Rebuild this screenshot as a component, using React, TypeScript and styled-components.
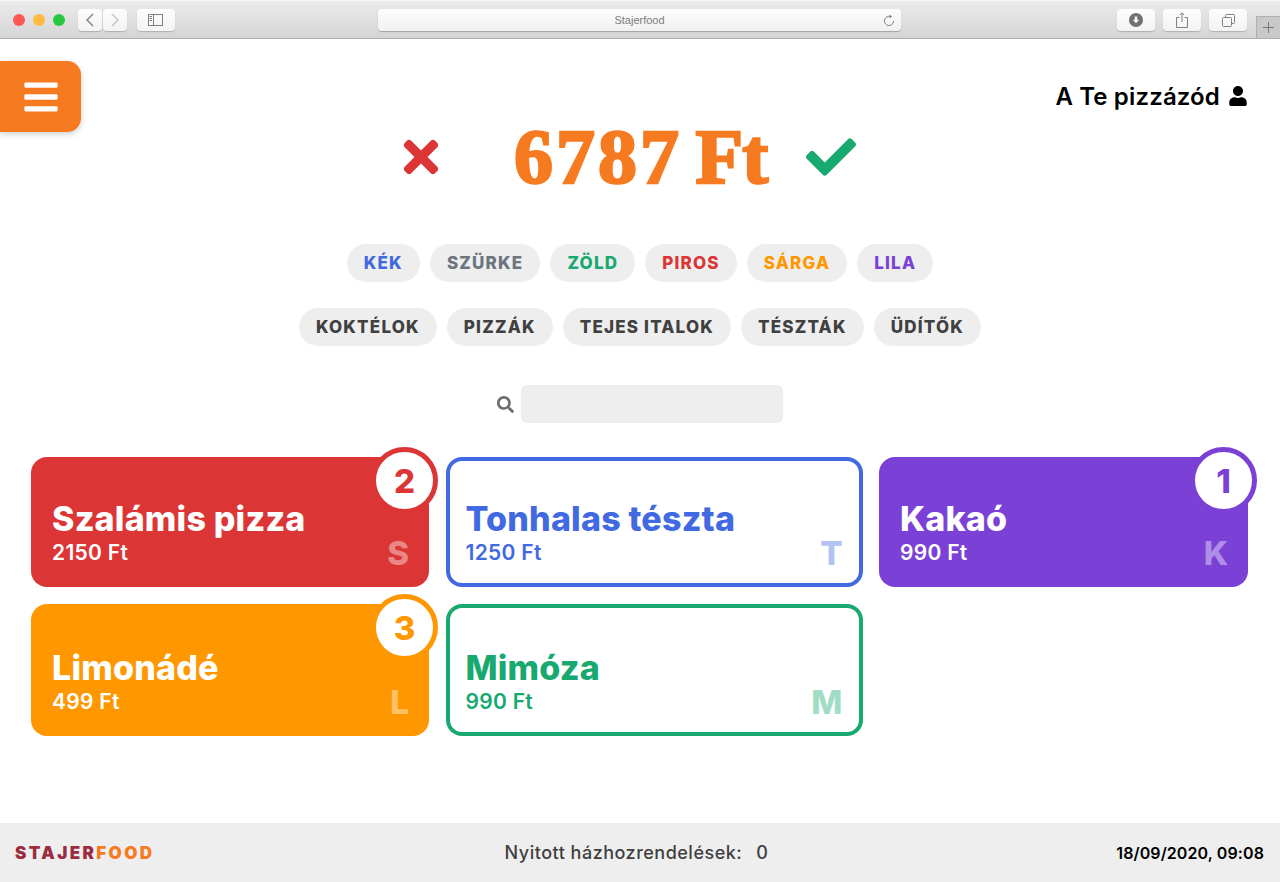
import styled, { createGlobalStyle } from 'styled-components';
import { FaBars, FaCheck, FaSearch, FaTimes, FaUser } from 'react-icons/fa';

const RED = '#dc3535';
const BLUE = '#4169e1';
const GREEN = '#17a96f';
const AMBER = '#ff9800';
const PURPLE = '#7b41d6';
const ORANGE = '#f67a20';
const GREY = '#6c757d';

const colours = [
  { label: 'KÉK', color: BLUE },
  { label: 'SZÜRKE', color: GREY },
  { label: 'ZÖLD', color: GREEN },
  { label: 'PIROS', color: RED },
  { label: 'SÁRGA', color: AMBER },
  { label: 'LILA', color: PURPLE },
];

const categories = ['KOKTÉLOK', 'PIZZÁK', 'TEJES ITALOK', 'TÉSZTÁK', 'ÜDÍTŐK'];

const products = [
  { name: 'Szalámis pizza', price: '2150 Ft', key: 'S', color: RED, filled: true, count: 2 },
  { name: 'Tonhalas tészta', price: '1250 Ft', key: 'T', color: BLUE, filled: false },
  { name: 'Kakaó', price: '990 Ft', key: 'K', color: PURPLE, filled: true, count: 1 },
  { name: 'Limonádé', price: '499 Ft', key: 'L', color: AMBER, filled: true, count: 3 },
  { name: 'Mimóza', price: '990 Ft', key: 'M', color: GREEN, filled: false },
];

const App = () => {
  return (
    <Page>
      <GlobalStyle />
      <BrowserBar>
        <Lights>
          <Light $color="#fc5753" />
          <Light $color="#fdbc40" />
          <Light $color="#27c83f" />
        </Lights>
        <NavGroup>
          <ChromeButton $width={24}>
            <svg width="10" height="14" viewBox="0 0 10 14" fill="none" stroke="#808080" strokeWidth="1.4">
              <path d="M8 1 2 7l6 6" />
            </svg>
          </ChromeButton>
          <ChromeButton $width={24}>
            <svg width="10" height="14" viewBox="0 0 10 14" fill="none" stroke="#c4c4c4" strokeWidth="1.4">
              <path d="m2 1 6 6-6 6" />
            </svg>
          </ChromeButton>
        </NavGroup>
        <ChromeButton $width={38}>
          <svg width="16" height="12" viewBox="0 0 16 12" fill="none" stroke="#808080">
            <rect x="0.5" y="0.5" width="14" height="11" />
            <path d="M5.5 0.5v11M1.5 2.5h2.5M1.5 4.5h2.5M1.5 6.5h2.5" />
          </svg>
        </ChromeButton>
        <AddressBar>
          Stajerfood
          <Reload>
            <svg width="12" height="13" viewBox="0 0 12 13" fill="none" stroke="#808080">
              <path d="M7.5 2.6A4.6 4.6 0 1 0 10.6 7" />
              <path d="M6.5 0.6 9 2.6 6.5 4.4z" fill="#808080" stroke="none" />
            </svg>
          </Reload>
        </AddressBar>
        <ActionGroup>
          <ChromeButton $width={38}>
            <svg width="14" height="14" viewBox="0 0 14 14">
              <circle cx="7" cy="7" r="7" fill="#707070" />
              <path d="M5.8 3.5h2.4v3.2h2L7 10.2 3.8 6.7h2z" fill="#fff" />
            </svg>
          </ChromeButton>
          <ChromeButton $width={38}>
            <svg width="12" height="16" viewBox="0 0 12 16" fill="none" stroke="#808080">
              <path d="M3.5 5.5h-3v10h11v-10h-3M6 10V1M3.8 3 6 .8 8.2 3" />
            </svg>
          </ChromeButton>
          <ChromeButton $width={38}>
            <svg width="13" height="13" viewBox="0 0 13 13" fill="none" stroke="#808080">
              <rect x="0.5" y="3.5" width="9" height="9" rx="1" />
              <path d="M3.5 3.5v-2a1 1 0 0 1 1-1h7a1 1 0 0 1 1 1v7a1 1 0 0 1-1 1h-2" />
            </svg>
          </ChromeButton>
        </ActionGroup>
        <NewTab>
          <svg width="11" height="11" viewBox="0 0 11 11" stroke="#777">
            <path d="M5.5 0v11M0 5.5h11" />
          </svg>
        </NewTab>
      </BrowserBar>

      <Main>
        <MenuButton>
          <FaBars size={38} />
        </MenuButton>

        <UserRow>
          A Te pizzázód <FaUser size={20} />
        </UserRow>

        <TotalRow>
          <CancelIcon>
            <FaTimes size={50} />
          </CancelIcon>
          <Amount>
            6787 <Currency>Ft</Currency>
          </Amount>
          <ConfirmIcon>
            <FaCheck size={50} />
          </ConfirmIcon>
        </TotalRow>

        <ChipRow>
          {colours.map((c) => (
            <Chip key={c.label} $color={c.color}>
              {c.label}
            </Chip>
          ))}
        </ChipRow>

        <CategoryRow>
          {categories.map((c) => (
            <Chip key={c} $color="#404040">
              {c}
            </Chip>
          ))}
        </CategoryRow>

        <SearchRow>
          <SearchIcon>
            <FaSearch size={17} />
          </SearchIcon>
          <SearchInput />
        </SearchRow>

        <ProductGrid>
          {products.map((p) => (
            <Card key={p.name} $color={p.color} $filled={p.filled}>
              <CardName>{p.name}</CardName>
              <CardPrice>{p.price}</CardPrice>
              <CardKey>{p.key}</CardKey>
              {p.count && <Badge $color={p.color}>{p.count}</Badge>}
            </Card>
          ))}
        </ProductGrid>
      </Main>

      <Footer>
        <Logo>
          STAJER<LogoAccent>FOOD</LogoAccent>
        </Logo>
        <OpenOrders>
          <span>Nyitott házhozrendelések:</span>
          <span>0</span>
        </OpenOrders>
        <Clock>18/09/2020, 09:08</Clock>
      </Footer>
    </Page>
  );
};

export default App;

const GlobalStyle = createGlobalStyle`
  html, body {
    margin: 0;
    padding: 0;
    background: #fff;
  }

  body {
    font-family: Inter, "Liberation Sans", sans-serif;
  }
`;

const Page = styled.div`
  width: 1280px;
  height: 882px;
  display: flex;
  flex-direction: column;
  overflow: hidden;
`;

const BrowserBar = styled.div`
  height: 39px;
  box-sizing: border-box;
  display: flex;
  align-items: flex-start;
  padding: 9px 0 0 13px;
  position: relative;
  background: linear-gradient(#ebebeb, #d5d5d5);
  border-top: 1px solid #f7f7f7;
  border-bottom: 1px solid #adadad;
`;

const Lights = styled.div`
  display: flex;
  gap: 8px;
  margin-top: 4px;
`;

const Light = styled.span<{ $color: string }>`
  width: 12px;
  height: 12px;
  border-radius: 50%;
  background: ${(p) => p.$color};
`;

const NavGroup = styled.div`
  display: flex;
  gap: 1px;
  margin-left: 13px;
`;

const ChromeButton = styled.div<{ $width: number }>`
  width: ${(p) => p.$width}px;
  height: 22px;
  margin-top: -1px;
  display: flex;
  align-items: center;
  justify-content: center;
  background: linear-gradient(#fdfdfd, #f3f3f3);
  border-radius: 4px;
  box-shadow: 0 1px 1px rgba(0, 0, 0, 0.2);

  ${NavGroup} + & {
    margin-left: 10px;
  }
`;

const AddressBar = styled.div`
  width: 523px;
  height: 22px;
  margin: -1px 0 0 203px;
  position: relative;
  display: flex;
  align-items: center;
  justify-content: center;
  font-family: "Liberation Sans", sans-serif;
  font-size: 11px;
  color: #7c7c7c;
  background: linear-gradient(#fdfdfd, #f1f1f1);
  border-radius: 4px;
  box-shadow: 0 1px 1px rgba(0, 0, 0, 0.25);
`;

const Reload = styled.span`
  position: absolute;
  right: 6px;
  top: 5px;
  display: flex;
`;

const ActionGroup = styled.div`
  display: flex;
  gap: 8px;
  margin-left: 216px;
`;

const NewTab = styled.div`
  position: absolute;
  right: 0;
  bottom: 0;
  width: 24px;
  height: 22px;
  display: flex;
  align-items: center;
  justify-content: center;
  background: #c9c9c9;
  border-left: 1px solid #b0b0b0;
  border-top: 1px solid #b0b0b0;
  box-sizing: border-box;
`;

const Main = styled.main`
  flex: 1;
  position: relative;
  display: flex;
  flex-direction: column;
  align-items: center;
`;

const MenuButton = styled.button`
  position: absolute;
  left: 0;
  top: 22px;
  width: 81px;
  height: 71px;
  padding: 0;
  border: 0;
  border-radius: 0 14px 14px 0;
  display: flex;
  align-items: center;
  justify-content: center;
  color: #fff;
  background: ${ORANGE};
  box-shadow: 0 2px 6px rgba(0, 0, 0, 0.2);
`;

const UserRow = styled.div`
  align-self: flex-end;
  height: 30px;
  margin: 42px 32px 0 0;
  display: flex;
  align-items: center;
  gap: 8px;
  font-size: 24px;
  font-weight: 600;
  letter-spacing: 0.15px;
  color: #000;
`;

const TotalRow = styled.div`
  height: 80px;
  margin-top: 6px;
  padding-right: 21px;
  display: flex;
  align-items: center;
`;

const CancelIcon = styled.span`
  display: flex;
  width: 36px;
  justify-content: center;
  color: ${RED};
`;

const ConfirmIcon = styled.span`
  display: flex;
  width: 50px;
  justify-content: center;
  color: ${GREEN};
`;

const Amount = styled.div`
  width: 254px;
  margin: 0 38px 0 75px;
  font-family: "Liberation Serif", serif;
  font-size: 78px;
  font-weight: 700;
  line-height: 80px;
  letter-spacing: 3px;
  word-spacing: -9px;
  white-space: nowrap;
  color: ${ORANGE};
  -webkit-text-stroke: 2.5px ${ORANGE};
`;

const Currency = styled.span`
  letter-spacing: -1px;
`;

const ChipRow = styled.div`
  margin-top: 47px;
  display: flex;
  gap: 10px;
`;

const CategoryRow = styled(ChipRow)`
  margin-top: 26px;
`;

const Chip = styled.div<{ $color: string }>`
  height: 38px;
  padding: 0 17px;
  display: flex;
  align-items: center;
  border-radius: 19px;
  font-size: 17px;
  font-weight: 800;
  letter-spacing: 1.2px;
  color: ${(p) => p.$color};
  background: #eeeeee;
`;

const SearchRow = styled.div`
  margin-top: 39px;
  display: flex;
  align-items: center;
  gap: 7px;
`;

const SearchIcon = styled.span`
  display: flex;
  color: #6e6e6e;
`;

const SearchInput = styled.div`
  width: 262px;
  height: 38px;
  border-radius: 6px;
  background: #eeeeee;
`;

const ProductGrid = styled.div`
  width: 1218px;
  margin-top: 34px;
  display: grid;
  grid-template-columns: 398px 417px 369px;
  grid-template-rows: 130px 132px;
  column-gap: 16.5px;
  row-gap: 17px;
`;

const Card = styled.div<{ $color: string; $filled: boolean }>`
  position: relative;
  box-sizing: border-box;
  display: flex;
  flex-direction: column;
  justify-content: flex-end;
  padding: 0 20px 21px ${(p) => (p.$filled ? '21px' : '20px')};
  border-radius: 16px;
  background: ${(p) => (p.$filled ? p.$color : '#fff')};
  color: ${(p) => (p.$filled ? '#fff' : p.$color)};
  box-shadow: ${(p) => (p.$filled ? 'none' : `inset 0 0 0 4px ${p.$color}`)};
`;

const CardName = styled.div`
  font-size: 34px;
  font-weight: 800;
  line-height: 40px;
  letter-spacing: 0.2px;
`;

const CardPrice = styled.div`
  font-size: 21px;
  font-weight: 600;
  line-height: 26px;
  letter-spacing: 0.3px;
  margin-top: 1px;
`;

const CardKey = styled.span`
  position: absolute;
  right: 20px;
  bottom: 16px;
  font-size: 33px;
  font-weight: 800;
  line-height: 36px;
  opacity: 0.4;
`;

const Badge = styled.div<{ $color: string }>`
  position: absolute;
  top: -10px;
  right: -9px;
  width: 67px;
  height: 67px;
  box-sizing: border-box;
  display: flex;
  align-items: center;
  justify-content: center;
  border-radius: 50%;
  border: 5px solid ${(p) => p.$color};
  background: #fff;
  color: ${(p) => p.$color};
  font-size: 33px;
  font-weight: 800;
`;

const Footer = styled.footer`
  height: 59px;
  box-sizing: border-box;
  padding: 0 16px 0 15px;
  display: grid;
  grid-template-columns: 1fr auto 1fr;
  align-items: center;
  background: #eeeeee;
`;

const Logo = styled.div`
  font-size: 17px;
  font-weight: 900;
  letter-spacing: 2.4px;
  color: #9b2c3f;
`;

const LogoAccent = styled.span`
  color: ${ORANGE};
`;

const OpenOrders = styled.div`
  display: flex;
  gap: 14px;
  margin-right: 6px;
  font-size: 18px;
  font-weight: 500;
  letter-spacing: 0.5px;
  color: #3f3f3f;
`;

const Clock = styled.div`
  justify-self: end;
  font-size: 16px;
  font-weight: 600;
  letter-spacing: 0.1px;
  color: #000;
`;
